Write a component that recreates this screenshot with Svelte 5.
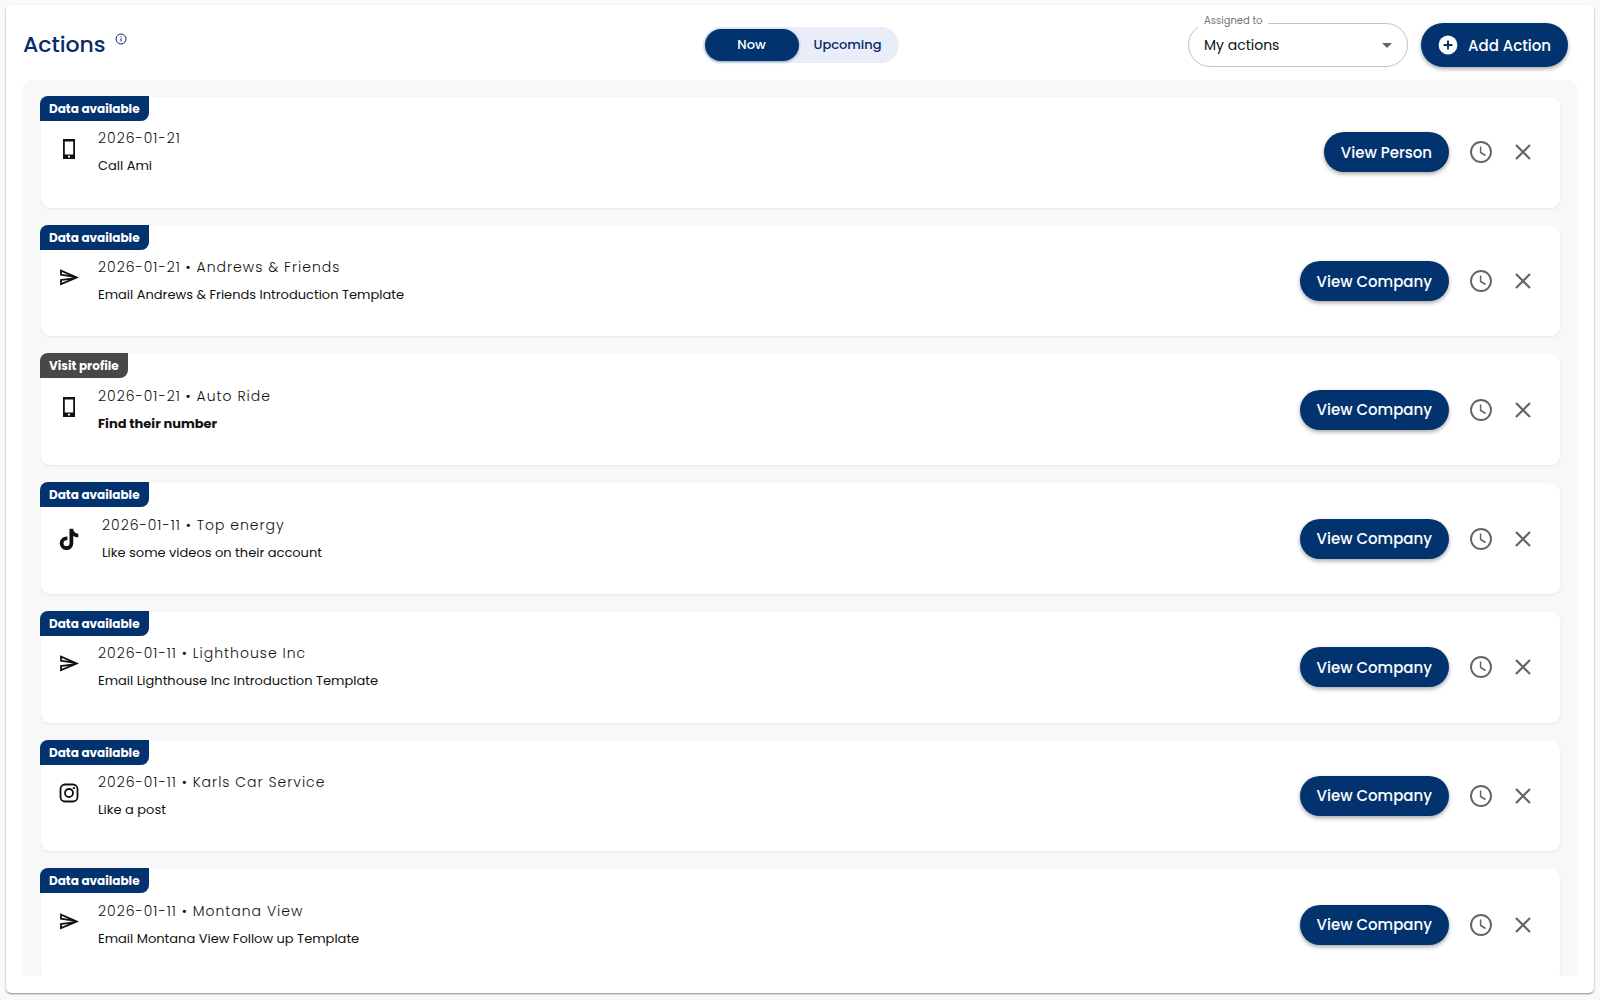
<script>
  const tabs = ['Now', 'Upcoming'];
  let tab = $state('Now');
  let assigned = $state('My actions');

  const actions = [
    { icon: 'phone', date: '2026-01-21', name: '', text: 'Call Ami', view: 'View Person' },
    { icon: 'send', date: '2026-01-21', name: 'Andrews & Friends', text: 'Email Andrews & Friends Introduction Template', view: 'View Company' },
    { icon: 'phone', date: '2026-01-21', name: 'Auto Ride', text: 'Find their number', view: 'View Company', missing: true },
    { icon: 'tiktok', date: '2026-01-11', name: 'Top energy', text: 'Like some videos on their account', view: 'View Company' },
    { icon: 'send', date: '2026-01-11', name: 'Lighthouse Inc', text: 'Email Lighthouse Inc Introduction Template', view: 'View Company' },
    { icon: 'instagram', date: '2026-01-11', name: 'Karls Car Service', text: 'Like a post', view: 'View Company' },
    { icon: 'send', date: '2026-01-11', name: 'Montana View', text: 'Email Montana View Follow up Template', view: 'View Company' }
  ];
</script>

<main class="panel">
  <header class="header">
    <div class="heading">
      <h1>Actions</h1>
      <svg class="info" viewBox="0 0 12 12" aria-hidden="true">
        <circle cx="6" cy="6" r="5" fill="none" stroke="currentColor" />
        <path d="M6 5.4v3M6 3.2v1.1" stroke="currentColor" />
      </svg>
    </div>

    <div class="tabs">
      {#each tabs as name}
        <button type="button" class="tab" class:active={tab === name} onclick={() => (tab = name)}>{name}</button>
      {/each}
    </div>

    <div class="tools">
      <div class="field">
        <label for="assigned">Assigned to</label>
        <select id="assigned" bind:value={assigned}>
          <option>My actions</option>
        </select>
        <svg class="arrow" viewBox="0 0 10 5" aria-hidden="true"><path d="M0 0h10L5 5z" fill="currentColor" /></svg>
      </div>
      <button type="button" class="primary add">
        <svg viewBox="0 0 20 20" aria-hidden="true">
          <circle cx="10" cy="10" r="9.4" fill="#fff" />
          <path d="M10 5.6v8.8M5.6 10h8.8" stroke="#02336f" stroke-width="1.9" />
        </svg>
        Add Action
      </button>
    </div>
  </header>

  <section class="list">
    <div class="cards">
      {#each actions as a}
        <article class="card">
          <span class="badge" class:grey={a.missing}>{a.missing ? 'Visit profile' : 'Data available'}</span>
          <div class="info-row" class:wide={a.icon === 'tiktok'}>
            <svg class="kind" viewBox="0 0 24 24" aria-hidden="true">
              {#if a.icon === 'phone'}
                <path fill-rule="evenodd" d="M6 2h12v20H6zM7.8 4.4v13.2h8.4V4.4zM11 18.8v1.8h2v-1.8z" />
              {:else if a.icon === 'send'}
                <path transform="translate(1.3 .6) scale(.9)" d="M4.01 6.03l7.51 3.22-7.52-1 .01-2.22m7.5 8.72L4 17.97v-2.22l7.51-1M2.01 3L2 10l15 2-15 2 .01 7L23 12z" />
              {:else if a.icon === 'tiktok'}
                <path d="M16.2 1.8h-3.7v14.4a3 3 0 1 1-3-3c.3 0 .6 0 .9.1V9.5a6.8 6.8 0 1 0 5.9 6.7V8.8c1.4 1 3.1 1.5 5 1.5V6.7c-2.8 0-5-2.2-5.1-4.9z" />
              {:else}
                <rect x="3.5" y="3.5" width="17" height="17" rx="4.5" fill="none" stroke="currentColor" stroke-width="1.8" />
                <circle cx="12" cy="12" r="4" fill="none" stroke="currentColor" stroke-width="1.8" />
                <circle cx="16.9" cy="7.1" r="1.2" />
              {/if}
            </svg>
            <div class="copy">
              <p class="meta">{a.date}{a.name ? ` • ${a.name}` : ''}</p>
              <p class="text" class:bold={a.missing}>{a.text}</p>
            </div>
          </div>
          <div class="controls">
            <button type="button" class="primary view">{a.view}</button>
            <button type="button" class="icon" aria-label="Snooze">
              <svg viewBox="0 0 24 24" aria-hidden="true">
                <circle cx="12" cy="12" r="10" fill="none" stroke="currentColor" stroke-width="1.9" />
                <path d="M11.6 6.5v6l5 3" fill="none" stroke="currentColor" stroke-width="1.5" />
              </svg>
            </button>
            <button type="button" class="icon" aria-label="Dismiss">
              <svg viewBox="0 0 24 24" aria-hidden="true">
                <path d="M5 5l14 14M19 5L5 19" stroke="currentColor" stroke-width="2.2" />
              </svg>
            </button>
          </div>
        </article>
      {/each}
    </div>
  </section>
</main>

<style>
  :global(body) {
    background: #f9f9f9;
  }
  :global(#app) {
    height: 100vh;
    box-sizing: border-box;
    padding: 5px 6px 7px;
  }
  * {
    box-sizing: border-box;
  }
  .panel {
    height: 100%;
    display: flex;
    flex-direction: column;
    padding: 18px 17px 17px;
    background: #fff;
    border-radius: 5px;
    box-shadow: 0 1px 2px rgba(0, 0, 0, 0.45);
    font-family: Poppins, Inter, 'Open Sans', sans-serif;
    color: #111;
  }
  button,
  select {
    font-family: inherit;
  }
  button {
    border: 0;
    cursor: pointer;
  }
  .header {
    display: grid;
    grid-template-columns: 1fr auto 1fr;
    align-items: center;
    padding: 0 9px 13px 0;
  }
  .heading {
    display: flex;
    gap: 9px;
    color: #082a68;
  }
  h1 {
    margin: 0;
    font-size: 22px;
    line-height: 32px;
    font-weight: 500;
  }
  .info {
    width: 12px;
    height: 12px;
    margin-top: 4px;
  }
  .tabs {
    display: flex;
    padding: 2px;
    margin-left: 10px;
    border-radius: 18px;
    background: #e8edf8;
  }
  .tab {
    width: 94px;
    height: 32px;
    padding: 0;
    border-radius: 16px;
    background: transparent;
    color: #082a68;
    font-size: 13px;
    font-weight: 500;
  }
  .tab:last-child {
    width: 98px;
  }
  .tab.active {
    background: #02336f;
    color: #fff;
    box-shadow: 0 1px 3px rgba(2, 51, 111, 0.4);
  }
  .tools {
    display: flex;
    justify-content: flex-end;
    gap: 13px;
  }
  .field {
    position: relative;
    width: 220px;
  }
  select {
    width: 100%;
    height: 44px;
    padding: 0 40px 0 15px;
    appearance: none;
    border: 1px solid #c4c4c4;
    border-radius: 22px;
    background: #fff;
    color: #111;
    font-size: 14px;
    font-weight: 400;
  }
  label {
    position: absolute;
    top: -9px;
    left: 10px;
    padding: 0 6px;
    background: #fff;
    color: #757575;
    font-size: 10px;
    line-height: 14px;
  }
  .arrow {
    position: absolute;
    right: 16px;
    top: 20px;
    width: 10px;
    height: 5px;
    color: #666;
    pointer-events: none;
  }
  .primary {
    background: #02336f;
    color: #fff;
    font-weight: 500;
    white-space: nowrap;
    box-shadow: 0 2px 4px rgba(0, 0, 0, 0.35);
  }
  .add {
    display: flex;
    align-items: center;
    justify-content: center;
    gap: 10px;
    width: 147px;
    height: 44px;
    padding: 0;
    border-radius: 22px;
    font-size: 15px;
  }
  .add svg {
    width: 20px;
    height: 20px;
  }
  .list {
    flex: 1;
    min-height: 0;
    overflow: hidden;
    border-radius: 8px 8px 0 0;
    background: #f8f8f8;
  }
  .cards {
    display: flex;
    flex-direction: column;
    gap: 18px;
    height: calc(100% - 13px);
    margin: 17px 17px 0 18px;
  }
  .card {
    position: relative;
    flex: 1 0 96px;
    display: flex;
    justify-content: space-between;
    align-items: center;
    padding: 0 16px;
    border-radius: 9px;
    background: #fff;
    box-shadow: 0 1px 3px rgba(0, 0, 0, 0.07);
  }
  .badge {
    position: absolute;
    top: -1px;
    left: -1px;
    padding: 0 9px;
    border-radius: 8px 0;
    background: #02336f;
    color: #fff;
    font-size: 12px;
    line-height: 25px;
    font-weight: 700;
  }
  .grey {
    background: #484848;
  }
  .info-row {
    display: flex;
    align-items: center;
    gap: 17px;
  }
  .kind {
    width: 24px;
    height: 24px;
    margin-bottom: 6px;
    fill: currentColor;
  }
  .wide {
    gap: 21px;
  }
  .wide .kind {
    margin-bottom: 0;
  }
  p {
    margin: 0;
    line-height: 27px;
  }
  .meta {
    font-size: 14px;
    font-weight: 300;
    letter-spacing: 1px;
  }
  .text {
    font-size: 13px;
  }
  .bold {
    font-weight: 700;
  }
  .controls {
    display: flex;
    align-items: center;
  }
  .view {
    height: 40px;
    margin-right: 11px;
    padding: 0 17px;
    border-radius: 20px;
    font-size: 15px;
  }
  .icon {
    display: flex;
    align-items: center;
    justify-content: center;
    width: 42px;
    height: 40px;
    padding: 0;
    background: none;
    color: #646464;
  }
  .icon svg {
    width: 24px;
    height: 24px;
  }
</style>
